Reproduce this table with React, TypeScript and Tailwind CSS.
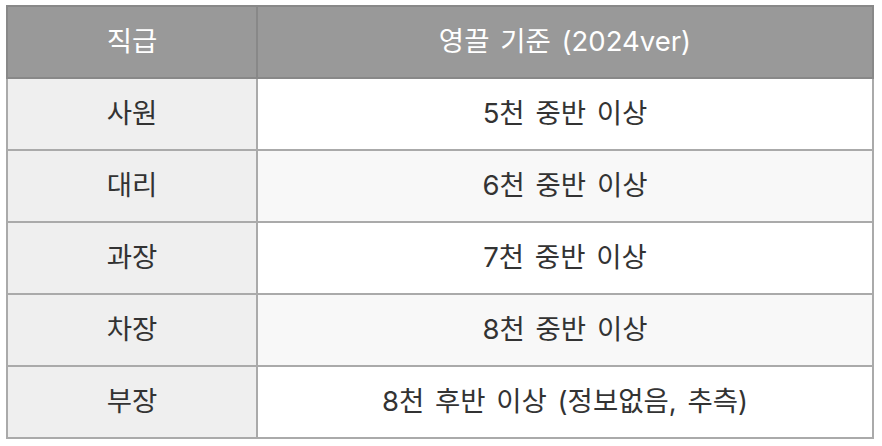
const rows = [
  { rank: "사원", pay: "5천 중반 이상" },
  { rank: "대리", pay: "6천 중반 이상" },
  { rank: "과장", pay: "7천 중반 이상" },
  { rank: "차장", pay: "8천 중반 이상" },
  { rank: "부장", pay: "8천 후반 이상 (정보없음, 추측)" },
];

const App = () => {
  return (
    <div className="w-[882px] h-[446px] bg-white pt-[5px] pl-[6px] font-['Inter','Noto_Sans_CJK_KR',sans-serif]">
      <table className="w-[868px] border-collapse text-[27.5px] text-[#333] [word-spacing:3px]">
        <thead>
          <tr className="h-[72px] bg-[#999999] text-white">
            <th className="w-[250px] border-2 border-[#888] font-normal">직급</th>
            <th className="border-2 border-[#888] font-normal">영끌 기준 (2024ver)</th>
          </tr>
        </thead>
        <tbody>
          {rows.map((item, index) => (
            <tr key={index} className="h-[72px]">
              <td className="border-2 border-[#aaa] bg-[#efefef] text-center">{item.rank}</td>
              <td className={`border-2 border-[#aaa] text-center ${index % 2 === 1 ? "bg-[#f8f8f8]" : "bg-white"}`}>{item.pay}</td>
            </tr>
          ))}
        </tbody>
      </table>
    </div>
  );
};

export default App;
